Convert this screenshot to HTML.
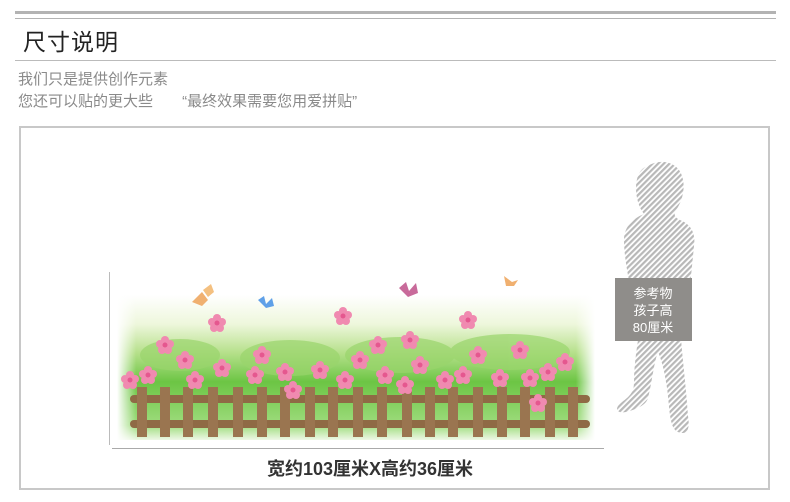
<!DOCTYPE html><html><head><meta charset="utf-8"><style>
body{margin:0;width:790px;height:502px;background:#fff;position:relative;overflow:hidden;font-family:"Liberation Sans","Noto Sans CJK SC",sans-serif}
.a{position:absolute}
</style></head><body>
<div class="a" style="left:15px;top:11px;width:761px;height:3px;background:#b3b3b3"></div>
<div class="a" style="left:15px;top:18px;width:761px;height:1px;background:#b3b3b3"></div>
<div class="a" style="left:23px;top:23px;font-size:23px;color:#222;letter-spacing:1px">尺寸说明</div>
<div class="a" style="left:15px;top:60px;width:761px;height:1px;background:#bbb"></div>
<div class="a" style="left:18px;top:69px;font-size:15px;line-height:22px;color:#8a8a8a;white-space:pre">我们只是提供创作元素
您还可以贴的更大些       “最终效果需要您用爱拼贴”</div>
<div class="a" style="left:19px;top:126px;width:747px;height:360px;border:2px solid #c8c8c8"></div>
<div class="a" style="left:109px;top:272px;width:1px;height:173px;background:#bbb"></div>
<div class="a" style="left:112px;top:448px;width:492px;height:1px;background:#aaa"></div>
<div class="a" style="left:0;width:740px;top:455px;text-align:center;font-size:18px;font-weight:bold;color:#333">宽约103厘米X高约36厘米</div>
<svg class="a" style="left:0;top:0" width="790" height="502">
<defs>
<linearGradient id="g" x1="0" y1="0" x2="0" y2="1"><stop offset="0" stop-color="#fff"/><stop offset="0.2" stop-color="#eef7dc"/><stop offset="0.4" stop-color="#b5e08a"/><stop offset="0.6" stop-color="#6cc544"/><stop offset="0.9" stop-color="#9fdc7e"/><stop offset="1" stop-color="#eef8e6"/></linearGradient>
<linearGradient id="h" x1="0" y1="0" x2="1" y2="0"><stop offset="0" stop-color="#fff" stop-opacity="1"/><stop offset="0.04" stop-color="#fff" stop-opacity="0"/><stop offset="0.96" stop-color="#fff" stop-opacity="0"/><stop offset="1" stop-color="#fff" stop-opacity="1"/></linearGradient>
<pattern id="st" width="4" height="4" patternUnits="userSpaceOnUse" patternTransform="rotate(45)"><rect width="4" height="4" fill="#fff"/><rect width="2.2" height="4" fill="#b8b8b8"/></pattern>
<g id="f"><circle r="4" cx="0" cy="-5" fill="#f08ab0"/><circle r="4" cx="5" cy="-1" fill="#f08ab0"/><circle r="4" cx="3" cy="5" fill="#f08ab0"/><circle r="4" cx="-3" cy="5" fill="#f08ab0"/><circle r="4" cx="-5" cy="-1" fill="#f08ab0"/><circle r="2.5" fill="#e5578f"/></g>
</defs>
<rect x="117" y="295" width="478" height="145" fill="url(#g)"/>
<g fill="#9ad56c" opacity="0.7"><ellipse cx="180" cy="355" rx="40" ry="16"/><ellipse cx="290" cy="358" rx="50" ry="18"/><ellipse cx="400" cy="355" rx="55" ry="18"/><ellipse cx="510" cy="352" rx="60" ry="18"/></g>
<rect x="117" y="295" width="478" height="145" fill="url(#h)"/>
<g fill="#8f6a45">
<rect x="130" y="395" width="460" height="8" rx="4"/><rect x="130" y="420" width="460" height="8" rx="4"/>
</g>
<g fill="#9a7550">
<rect x="137" y="387" width="10" height="50"/><rect x="160" y="387" width="10" height="50"/><rect x="183" y="387" width="10" height="50"/><rect x="208" y="387" width="10" height="50"/><rect x="233" y="387" width="10" height="50"/><rect x="257" y="387" width="10" height="50"/><rect x="280" y="387" width="10" height="50"/><rect x="305" y="387" width="10" height="50"/><rect x="328" y="387" width="10" height="50"/><rect x="353" y="387" width="10" height="50"/><rect x="377" y="387" width="10" height="50"/><rect x="402" y="387" width="10" height="50"/><rect x="425" y="387" width="10" height="50"/><rect x="448" y="387" width="10" height="50"/><rect x="473" y="387" width="10" height="50"/><rect x="497" y="387" width="10" height="50"/><rect x="520" y="387" width="10" height="50"/><rect x="545" y="387" width="10" height="50"/><rect x="568" y="387" width="10" height="50"/>
</g>
<g>
<use href="#f" x="165" y="345"/><use href="#f" x="148" y="375"/><use href="#f" x="185" y="360"/><use href="#f" x="195" y="380"/><use href="#f" x="222" y="368"/><use href="#f" x="255" y="375"/><use href="#f" x="262" y="355"/><use href="#f" x="285" y="372"/><use href="#f" x="293" y="390"/><use href="#f" x="320" y="370"/><use href="#f" x="345" y="380"/><use href="#f" x="360" y="360"/><use href="#f" x="378" y="345"/><use href="#f" x="385" y="375"/><use href="#f" x="405" y="385"/><use href="#f" x="420" y="365"/><use href="#f" x="445" y="380"/><use href="#f" x="463" y="375"/><use href="#f" x="478" y="355"/><use href="#f" x="500" y="378"/><use href="#f" x="520" y="350"/><use href="#f" x="530" y="378"/><use href="#f" x="548" y="372"/><use href="#f" x="565" y="362"/><use href="#f" x="538" y="403"/><use href="#f" x="130" y="380"/>
<use href="#f" x="217" y="323"/><use href="#f" x="343" y="316"/><use href="#f" x="468" y="320"/><use href="#f" x="410" y="340"/>
</g>
<g><path d="M192 302 l10-10 l6 8 l-6 6 z" fill="#f0b070"/><path d="M203 290 l8-6 l3 8 l-6 5z" fill="#f4c080"/>
<path d="M258 300 l6-4 l2 8 l6-6 l2 8 l-8 2z" fill="#5fa0e8"/>
<path d="M399 288 l7-6 l3 9 l7-8 l2 10 l-10 4z" fill="#c86a9a"/>
<path d="M504 276 l8 6 l6-2 l-4 6 l-8 0z" fill="#f0b070"/></g>
<path fill="url(#st)" d="M648 166 c12-8 30-4 34 10 c4 12 0 26-6 34 c-3 4 -1 8 4 10 c10 4 16 12 14 26 l-4 40 c-2 10-4 20-6 30 l-4 10 c2 30 6 60 8 90 c2 12 0 20-10 16 c-10-4-8-30-12-50 c-3-20-8-30-8-30 c-4 10-6 30-10 46 c-2 8-14 12-22 14 c-10 2-12-4-4-10 c8-6 12-10 12-20 c0-20 4-40 6-56 l-8-30 c-4-20-8-40-8-56 c0-14 10-22 20-26 c-8-10-10-28-6-38 c2-6 6-9 10-10z"/>
<rect x="615" y="278" width="77" height="63" fill="#8f8d8a"/>
<text x="653" y="298" font-size="13" fill="#fff" text-anchor="middle" font-family="Liberation Sans,Noto Sans CJK SC,sans-serif">参考物</text>
<text x="653" y="315" font-size="13" fill="#fff" text-anchor="middle" font-family="Liberation Sans,Noto Sans CJK SC,sans-serif">孩子高</text>
<text x="653" y="332" font-size="13" fill="#fff" text-anchor="middle" font-family="Liberation Sans,Noto Sans CJK SC,sans-serif">80厘米</text>
</svg>
</body></html>
